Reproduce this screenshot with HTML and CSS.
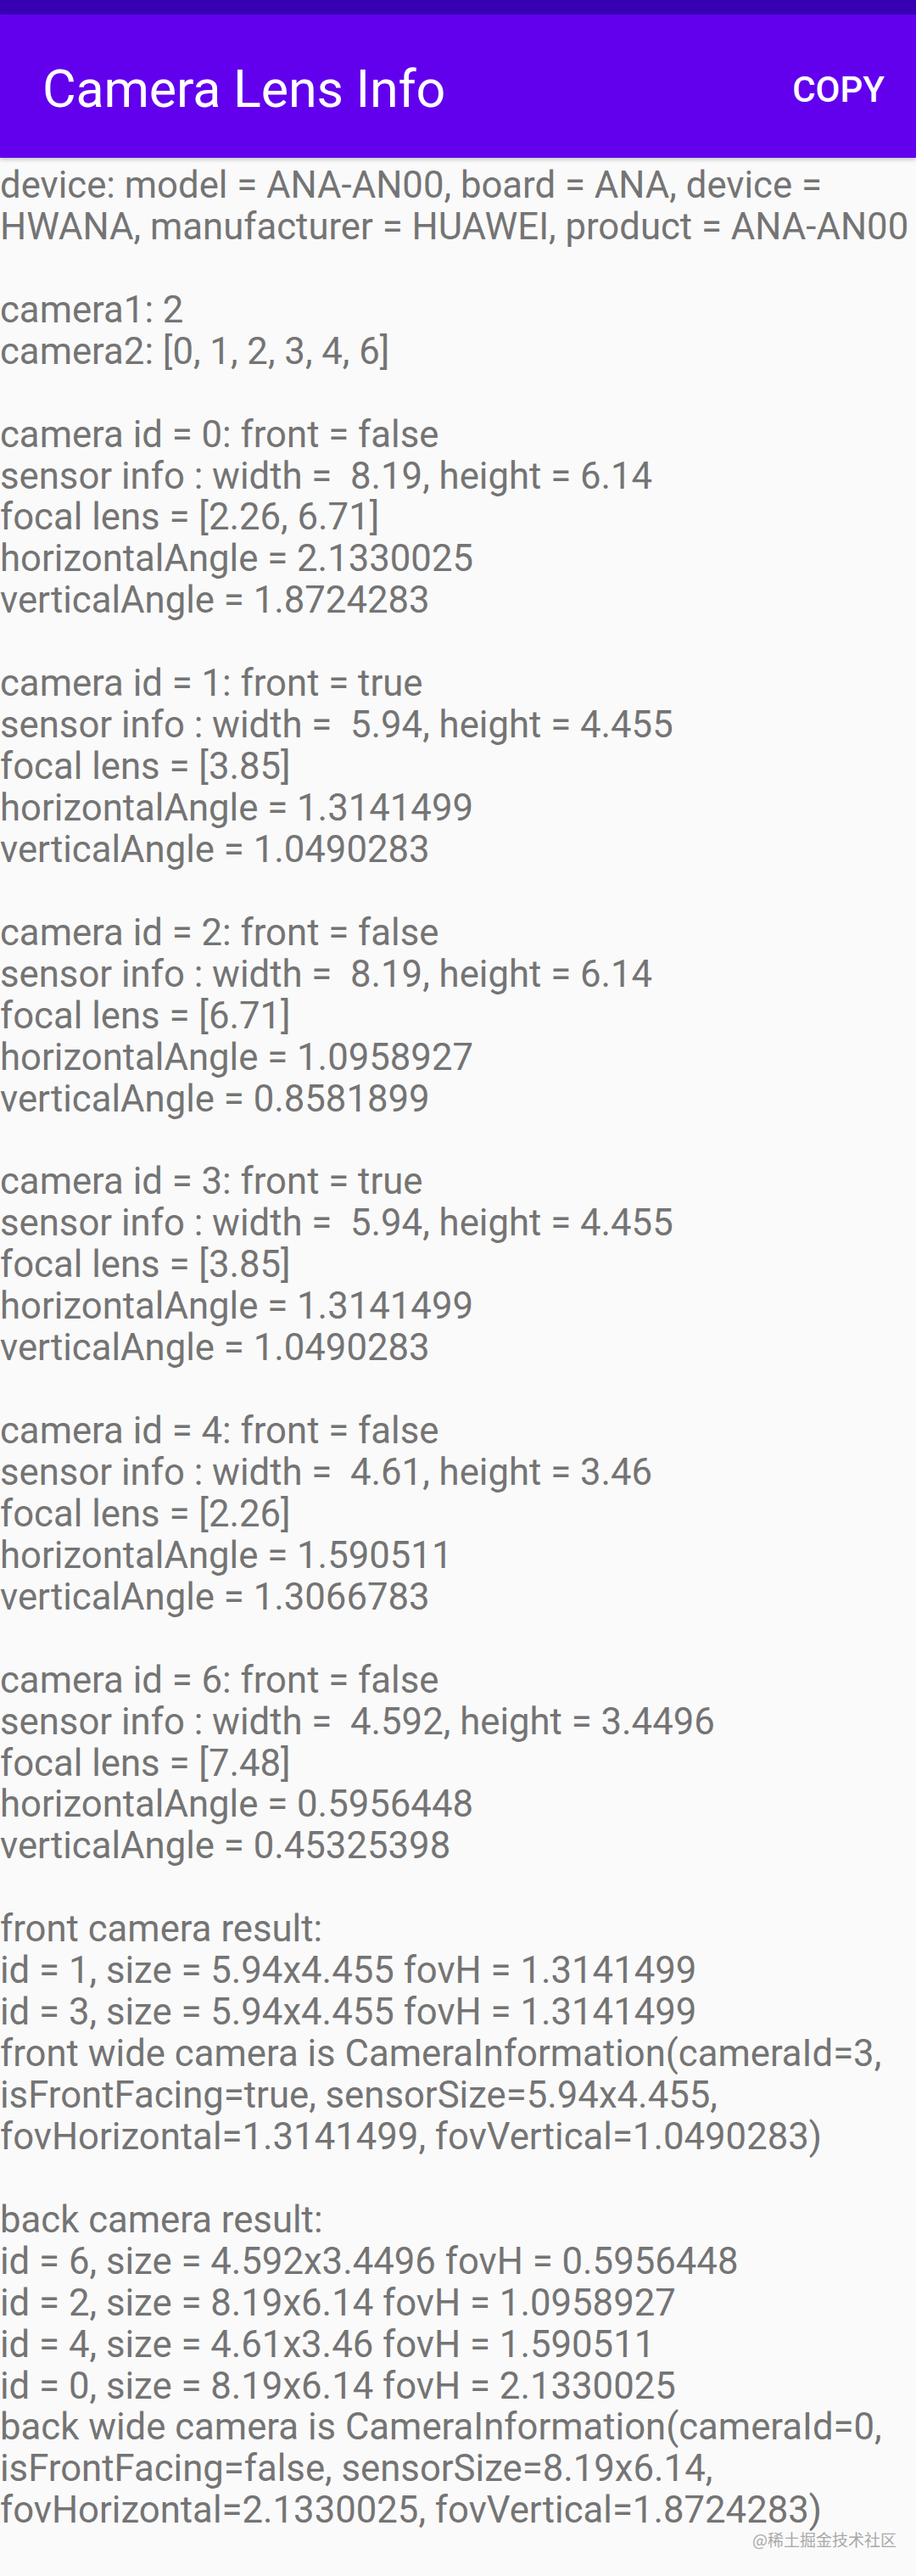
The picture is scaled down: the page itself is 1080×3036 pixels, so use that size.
FILE: index.html
```html
<!DOCTYPE html>
<html lang="en">
<head>
<meta charset="utf-8">
<title>Camera Lens Info</title>
<link rel="stylesheet" href="styles.css">
</head>
<body>
<div class="status-bar"></div>
<header class="toolbar">
  <h1 class="toolbar-title">Camera Lens Info</h1>
  <button class="toolbar-action">COPY</button>
</header>
<main class="log">
  <div class="block">
    <div class="line">device: model = ANA-AN00, board = ANA, device =</div>
    <div class="line">HWANA, manufacturer = HUAWEI, product = ANA-AN00</div>
  </div>
  <div class="block">
    <div class="line">camera1: 2</div>
    <div class="line">camera2: [0, 1, 2, 3, 4, 6]</div>
  </div>
  <div class="block">
    <div class="line">camera id = 0: front = false</div>
    <div class="line">sensor info : width =  8.19, height = 6.14</div>
    <div class="line">focal lens = [2.26, 6.71]</div>
    <div class="line">horizontalAngle = 2.1330025</div>
    <div class="line">verticalAngle = 1.8724283</div>
  </div>
  <div class="block">
    <div class="line">camera id = 1: front = true</div>
    <div class="line">sensor info : width =  5.94, height = 4.455</div>
    <div class="line">focal lens = [3.85]</div>
    <div class="line">horizontalAngle = 1.3141499</div>
    <div class="line">verticalAngle = 1.0490283</div>
  </div>
  <div class="block">
    <div class="line">camera id = 2: front = false</div>
    <div class="line">sensor info : width =  8.19, height = 6.14</div>
    <div class="line">focal lens = [6.71]</div>
    <div class="line">horizontalAngle = 1.0958927</div>
    <div class="line">verticalAngle = 0.8581899</div>
  </div>
  <div class="block">
    <div class="line">camera id = 3: front = true</div>
    <div class="line">sensor info : width =  5.94, height = 4.455</div>
    <div class="line">focal lens = [3.85]</div>
    <div class="line">horizontalAngle = 1.3141499</div>
    <div class="line">verticalAngle = 1.0490283</div>
  </div>
  <div class="block">
    <div class="line">camera id = 4: front = false</div>
    <div class="line">sensor info : width =  4.61, height = 3.46</div>
    <div class="line">focal lens = [2.26]</div>
    <div class="line">horizontalAngle = 1.590511</div>
    <div class="line">verticalAngle = 1.3066783</div>
  </div>
  <div class="block">
    <div class="line">camera id = 6: front = false</div>
    <div class="line">sensor info : width =  4.592, height = 3.4496</div>
    <div class="line">focal lens = [7.48]</div>
    <div class="line">horizontalAngle = 0.5956448</div>
    <div class="line">verticalAngle = 0.45325398</div>
  </div>
  <div class="block">
    <div class="line">front camera result:</div>
    <div class="line">id = 1, size = 5.94x4.455 fovH = 1.3141499</div>
    <div class="line">id = 3, size = 5.94x4.455 fovH = 1.3141499</div>
    <div class="line">front wide camera is CameraInformation(cameraId=3,</div>
    <div class="line">isFrontFacing=true, sensorSize=5.94x4.455,</div>
    <div class="line">fovHorizontal=1.3141499, fovVertical=1.0490283)</div>
  </div>
  <div class="block">
    <div class="line">back camera result:</div>
    <div class="line">id = 6, size = 4.592x3.4496 fovH = 0.5956448</div>
    <div class="line">id = 2, size = 8.19x6.14 fovH = 1.0958927</div>
    <div class="line">id = 4, size = 4.61x3.46 fovH = 1.590511</div>
    <div class="line">id = 0, size = 8.19x6.14 fovH = 2.1330025</div>
    <div class="line">back wide camera is CameraInformation(cameraId=0,</div>
    <div class="line">isFrontFacing=false, sensorSize=8.19x6.14,</div>
    <div class="line">fovHorizontal=2.1330025, fovVertical=1.8724283)</div>
  </div>
</main>
<div class="watermark">@稀土掘金技术社区</div>
</body>
</html>
```
FILE: styles.css
```css
html {
  background: #fafafa;
}
body {
  margin: 0;
  min-height: 3036px;
  position: relative;
  background: #fafafa;
  font-family: Roboto, "Noto Sans", sans-serif;
}
.status-bar {
  height: 17px;
  background: #3700b3;
}
.toolbar {
  box-sizing: border-box;
  height: 169px;
  background: #6200ee;
  display: flex;
  align-items: center;
  justify-content: space-between;
  padding: 8px 37px 0 50px;
  box-shadow: 0 2px 5px rgba(0, 0, 0, 0.22);
  position: relative;
  z-index: 1;
}
.toolbar-title {
  margin: 0;
  color: #ffffff;
  font-family: Roboto, sans-serif;
  font-weight: 400;
  font-size: 61px;
  letter-spacing: -0.2px;
  line-height: 1;
}
.toolbar-action {
  border: 0;
  background: transparent;
  color: #ffffff;
  font-family: Roboto, sans-serif;
  font-weight: 500;
  font-size: 42px;
  padding: 0;
  line-height: 1;
}
.log {
  padding-top: 8px;
  color: #747474;
  font-family: Roboto, sans-serif;
  font-size: 43.7px;
  line-height: 48.93px;
}
.block + .block {
  margin-top: 48.93px;
}
.line {
  white-space: pre;
}
.watermark {
  position: absolute;
  left: 887px;
  top: 2980px;
  font-family: "Noto Sans CJK SC", sans-serif;
  font-size: 19px;
  line-height: 26px;
  color: #a9a9a9;
}
```
